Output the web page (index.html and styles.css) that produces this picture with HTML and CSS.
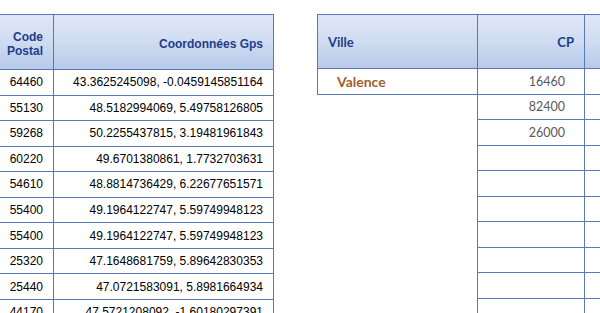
FILE: index.html
```html
<!DOCTYPE html>
<html lang="fr">
<head>
<meta charset="utf-8">
<link rel="stylesheet" href="styles.css">
</head>
<body>
<div class="page">
  <div class="gps">
    <div class="h c1">Code<br>Postal</div>
    <div class="h c2">Coordonnées Gps</div>
    <div class="d c1">64460</div><div class="d c2">43.3625245098, -0.0459145851164</div>
    <div class="d c1">55130</div><div class="d c2">48.5182994069, 5.49758126805</div>
    <div class="d c1">59268</div><div class="d c2">50.2255437815, 3.19481961843</div>
    <div class="d c1">60220</div><div class="d c2">49.6701380861, 1.7732703631</div>
    <div class="d c1">54610</div><div class="d c2">48.8814736429, 6.22677651571</div>
    <div class="d c1">55400</div><div class="d c2">49.1964122747, 5.59749948123</div>
    <div class="d c1">55400</div><div class="d c2">49.1964122747, 5.59749948123</div>
    <div class="d c1">25320</div><div class="d c2">47.1648681759, 5.89642830353</div>
    <div class="d c1">25440</div><div class="d c2">47.0721583091, 5.8981664934</div>
    <div class="d c1">44170</div><div class="d c2">47.5721208092, -1.60180297391</div>
  </div>
  <div class="villes">
    <div class="vh vc1">Ville</div>
    <div class="vh vc2">CP</div>
    <div class="vh vc3"></div>
    <div class="vd vc1 ville">Valence</div><div class="vd vc2">16460</div><div class="vd vc3"></div>
    <div class="empty"></div><div class="vd vc2">82400</div><div class="vd vc3"></div>
    <div class="empty"></div><div class="vd vc2">26000</div><div class="vd vc3"></div>
    <div class="empty"></div><div class="vd vc2"></div><div class="vd vc3"></div>
    <div class="empty"></div><div class="vd vc2"></div><div class="vd vc3"></div>
    <div class="empty"></div><div class="vd vc2"></div><div class="vd vc3"></div>
    <div class="empty"></div><div class="vd vc2"></div><div class="vd vc3"></div>
    <div class="empty"></div><div class="vd vc2"></div><div class="vd vc3"></div>
    <div class="empty"></div><div class="vd vc2"></div><div class="vd vc3"></div>
    <div class="empty"></div><div class="vd vc2"></div><div class="vd vc3"></div>
  </div>
</div>
</body>
</html>
```

FILE: styles.css
```css
html, body {
  margin: 0;
  padding: 0;
  background: #ffffff;
  overflow: hidden;
}
.page {
  display: flex;
  align-items: flex-start;
  gap: 43px;
  padding-top: 14px;
  width: 600px;
  height: 299px;
  overflow: hidden;
}
.gps {
  flex: none;
  display: grid;
  grid-template-columns: 54px 220px;
  grid-template-rows: 55px repeat(10, 25.55px);
  border-top: 1px solid #5a78b7;
  font-family: "Liberation Sans", Arial, sans-serif;
  font-size: 12px;
  color: #000;
}
.gps > div {
  border-bottom: 1px solid #5a78b7;
  border-right: 1px solid #5a78b7;
  display: flex;
  align-items: center;
  justify-content: flex-end;
  padding-right: 10px;
  box-sizing: border-box;
}
.h {
  background: linear-gradient(to bottom, #dfe7f5 0%, #cfdcf1 50%, #b7cae9 100%);
  color: #1f3c8a;
  font-weight: bold;
  text-align: right;
  line-height: 14px;
  padding-top: 3px;
}
.villes {
  flex: none;
  display: grid;
  grid-template-columns: 161px 107px 60px;
  grid-template-rows: 55px repeat(10, 25.55px);
  font-family: Lato, "Open Sans", sans-serif;
  font-size: 12px;
}
.villes > div {
  box-sizing: border-box;
  display: flex;
  align-items: center;
}
.vh {
  border-top: 1px solid #5a78b7;
  border-bottom: 1px solid #5a78b7;
  border-right: 1px solid #5a78b7;
  background: linear-gradient(to bottom, #dfe7f5 0%, #cfdcf1 50%, #b7cae9 100%);
  color: #1f3c8a;
  font-weight: bold;
  font-size: 13px;
}
.vh.vc1 {
  border-left: 1px solid #5a78b7;
  padding-left: 10px;
}
.vh.vc2 {
  justify-content: flex-end;
  padding-right: 10px;
}
.vd {
  border-bottom: 1px solid #5a78b7;
  border-right: 1px solid #5a78b7;
}
.vd.vc1 {
  border-left: 1px solid #5a78b7;
}
.vd.vc2 {
  justify-content: flex-end;
  padding-right: 19px;
  color: #595959;
  font-size: 12.5px;
}
.empty {
  border-right: 1px solid #5a78b7;
}
.ville {
  color: #a0602c;
  font-weight: bold;
  font-size: 14px;
  padding-left: 19px;
}
```
